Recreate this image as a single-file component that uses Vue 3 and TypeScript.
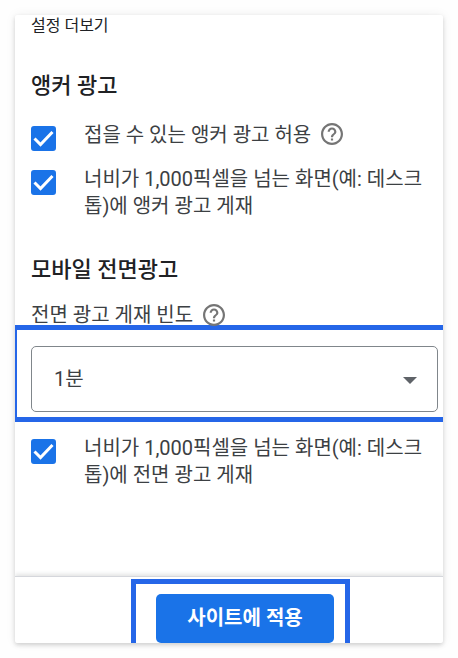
<script setup lang="ts">
import { ref } from 'vue'

const allowCollapsible = ref(true)
const wideAnchor = ref(true)
const wideInterstitial = ref(true)
const frequency = ref('1')
</script>

<template>
  <main class="card">
    <div class="content">
      <p class="more">설정 더보기</p>

      <section class="group">
        <h2>앵커 광고</h2>
        <div class="option">
          <span class="check">
            <input id="collapsible" v-model="allowCollapsible" type="checkbox" />
            <svg viewBox="0 0 25 25" aria-hidden="true"><path d="M3.5 12.5L9.500 18.500L21.500 6" /></svg>
          </span>
          <label for="collapsible">접을 수 있는 앵커 광고 허용</label>
          <button class="help" type="button" aria-label="도움말">
            <svg viewBox="2 2 20 20" aria-hidden="true"><path d="M11 18h2v-2h-2v2zm1-16C6.480 2 2 6.480 2 12s4.480 10 10 10 10-4.480 10-10S17.520 2 12 2zm0 18c-4.410 0-8-3.590-8-8s3.590-8 8-8 8 3.590 8 8-3.590 8-8 8zm0-14c-2.210 0-4 1.790-4 4h2c0-1.100.9-2 2-2s2 .9 2 2c0 2-3 1.750-3 5h2c0-2.250 3-2.500 3-5 0-2.210-1.790-4-4-4z" /></svg>
          </button>
        </div>
        <div class="option">
          <span class="check">
            <input id="wide-anchor" v-model="wideAnchor" type="checkbox" />
            <svg viewBox="0 0 25 25" aria-hidden="true"><path d="M3.5 12.5L9.500 18.500L21.500 6" /></svg>
          </span>
          <label for="wide-anchor">너비가 1,000픽셀을 넘는 화면(예: 데스크톱)에 앵커 광고 게재</label>
        </div>
      </section>

      <section class="group">
        <h2>모바일 전면광고</h2>
        <div class="field-label">
          <label for="frequency">전면 광고 게재 빈도</label>
          <button class="help" type="button" aria-label="도움말">
            <svg viewBox="2 2 20 20" aria-hidden="true"><path d="M11 18h2v-2h-2v2zm1-16C6.480 2 2 6.480 2 12s4.480 10 10 10 10-4.480 10-10S17.520 2 12 2zm0 18c-4.410 0-8-3.590-8-8s3.590-8 8-8 8 3.590 8 8-3.590 8-8 8zm0-14c-2.210 0-4 1.790-4 4h2c0-1.100.9-2 2-2s2 .9 2 2c0 2-3 1.750-3 5h2c0-2.250 3-2.500 3-5 0-2.210-1.790-4-4-4z" /></svg>
          </button>
        </div>
        <div class="highlight">
          <div class="select">
            <select id="frequency" v-model="frequency">
              <option value="1">1분</option>
            </select>
            <svg viewBox="0 0 14 7" aria-hidden="true"><path d="M0 0h14L7 7z" /></svg>
          </div>
        </div>
        <div class="option">
          <span class="check">
            <input id="wide-interstitial" v-model="wideInterstitial" type="checkbox" />
            <svg viewBox="0 0 25 25" aria-hidden="true"><path d="M3.5 12.5L9.500 18.500L21.500 6" /></svg>
          </span>
          <label for="wide-interstitial">너비가 1,000픽셀을 넘는 화면(예: 데스크톱)에 전면 광고 게재</label>
        </div>
      </section>
    </div>

    <footer class="actions">
      <div class="action-highlight">
        <button class="apply" type="button">사이트에 적용</button>
      </div>
    </footer>
  </main>
</template>

<style>
body {
  background: #fefefe;
}
</style>

<style scoped>
.card {
  box-sizing: border-box;
  display: flex;
  flex-direction: column;
  min-height: calc(100vh - 30px);
  margin: 15px;
  overflow: hidden;
  background: #fff;
  border-radius: 2px;
  box-shadow: 0 2px 4px rgba(0, 0, 0, 0.16), 0 0 12px rgba(0, 0, 0, 0.06);
  color: #3c4043;
  font-family: Roboto, "Noto Sans CJK KR", sans-serif;
  font-size: 20px;
  line-height: 27px;
}

.content {
  flex: 1;
}

.more {
  margin: 0;
  padding: 1px 16px 0;
  color: #202124;
  font-size: 16px;
  line-height: 20px;
}

.group {
  padding-top: 36px;
}

h2 {
  margin: 0;
  padding: 0 16px;
  color: #202124;
  font-size: 22px;
  font-weight: 500;
  line-height: 28px;
}

.option {
  display: flex;
  align-items: flex-start;
  margin-top: 13px;
  padding: 0 16px;
}

h2 + .option {
  margin-top: 22px;
}

.option + .option {
  margin-top: 15px;
}

.check {
  position: relative;
  flex: none;
  width: 25px;
  height: 25px;
  margin: 4px 28px 0 0;
}

.check input {
  display: block;
  width: 25px;
  height: 25px;
  margin: 0;
  appearance: none;
  border: 2px solid #5f6368;
  border-radius: 3px;
}

.check input:checked {
  background: #1a73e8;
  border-color: #1a73e8;
}

.check svg {
  position: absolute;
  inset: 0;
  fill: none;
  stroke: #fff;
  stroke-width: 3;
  pointer-events: none;
}

.help {
  flex: none;
  width: 22px;
  height: 22px;
  margin: 0 0 0 10px;
  padding: 0;
  background: none;
  border: 0;
}

.option .help {
  margin-top: 1px;
}

.help svg {
  display: block;
  fill: #757575;
}

.field-label {
  display: flex;
  align-items: center;
  height: 20px;
  margin-top: 21px;
  padding: 0 16px;
}

.highlight {
  padding: 16px 5px 5px 14px;
  border: solid #2566e8;
  border-width: 5px 0 5px 2px;
}

.select {
  position: relative;
}

select {
  display: block;
  box-sizing: border-box;
  width: 100%;
  height: 66px;
  padding: 0 48px 0 22px;
  appearance: none;
  background: #fff;
  border: 1px solid #80868b;
  border-radius: 5px;
  color: #3c4043;
  font: inherit;
}

.select svg {
  position: absolute;
  top: 31px;
  right: 21px;
  width: 14px;
  height: 7px;
  fill: #5f6368;
  pointer-events: none;
}

.actions {
  display: flex;
  justify-content: center;
  padding-top: 2px;
  border-top: 1px solid #d5d7dc;
  box-shadow: 0 -2px 4px rgba(60, 64, 67, 0.14);
}

.action-highlight {
  margin-left: 23px;
  padding: 10px 11px 0 20px;
  border: solid #2566e8;
  border-width: 5px 5px 0;
}

.apply {
  display: block;
  height: 49px;
  padding: 0 31px;
  background: #1a73e8;
  border: 0;
  border-radius: 5px;
  color: #fff;
  font: inherit;
  font-weight: 700;
}
</style>
